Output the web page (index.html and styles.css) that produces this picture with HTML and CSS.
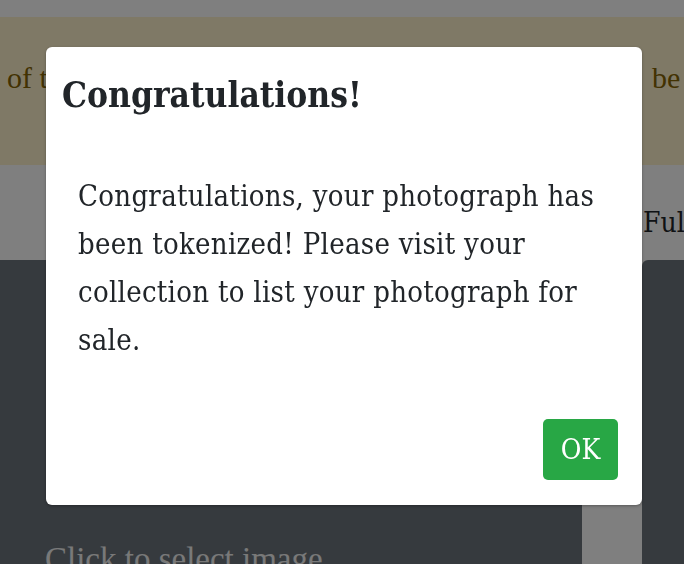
FILE: index.html
```html
<!DOCTYPE html>
<html lang="en">
<head>
    <meta charset="UTF-8">
    <meta name="viewport" content="width=device-width, initial-scale=1.0">
    <title>Mint photograph</title>
    <link rel="stylesheet" href="styles.css">
</head>
<body>
    <div class="page">
        <div class="topbar"></div>

        <div class="alert">
            <span class="alert-left">of the network fee will</span>
            <span class="alert-right">be charged.</span>
        </div>

        <div class="main">
            <div class="col">
                <div class="col-label"></div>
                <div class="panel">
                    <div class="panel-hint">Click to select image</div>
                </div>
            </div>
            <div class="col">
                <div class="col-label">Full size</div>
                <div class="panel panel-right"></div>
            </div>
        </div>
    </div>

    <!-- modal -->
    <div class="backdrop"></div>
    <div class="modal">
        <div class="modal-header">
            <h2 class="modal-title">Congratulations!</h2>
        </div>
        <div class="modal-body">
            Congratulations, your photograph has been tokenized! Please visit your collection to list your photograph for sale.
        </div>
        <div class="modal-footer">
            <button class="btn-ok">OK</button>
        </div>
    </div>
</body>
</html>
```

FILE: styles.css
```css
body {
    margin: 0;
    width: 684px;
    height: 564px;
    overflow: hidden;
    background: white;
    font-family: 'DejaVu Serif Condensed', 'DejaVu Serif', serif;
    font-stretch: condensed;
    color: #212529;
}

.page {
    width: 684px;
}

.topbar {
    height: 17px;
    background: white;
}

.alert {
    height: 148px;
    background: #fff3cd;
    color: #856404;
    font-family: 'Liberation Serif', serif;
    font-stretch: normal;
    font-size: 30px;
    display: grid;
    grid-template-columns: 645px 200px;
    padding: 44px 0 0 7px;
    box-sizing: border-box;
    white-space: nowrap;
    overflow: hidden;
}

.main {
    display: grid;
    grid-template-columns: 582px 60px 42px;
}

.main .col:last-child {
    grid-column: 3;
    overflow: hidden;
}

.col-label {
    height: 95px;
    box-sizing: border-box;
    padding-top: 41px;
    padding-left: 1px;
    font-size: 28px;
    color: #212529;
    white-space: nowrap;
}

.panel {
    height: 304px;
    background: #6c757d;
    padding: 281px 0 0 45px;
    box-sizing: border-box;
    overflow: hidden;
}

.panel-right {
    border-radius: 6px 0 0 0;
}

.panel-hint {
    font-family: 'Liberation Serif', serif;
    font-stretch: normal;
    font-size: 33px;
    color: #f2f2f2;
    white-space: nowrap;
}

.backdrop {
    position: fixed;
    inset: 0;
    background: rgba(0,0,0,0.5);
}

.modal {
    position: absolute;
    left: 46px;
    top: 47px;
    width: 596px;
    height: 458px;
    background: white;
    border-radius: 6px;
    box-shadow: 0 1px 3px rgba(0,0,0,0.3);
    display: flex;
    flex-direction: column;
}

.modal-header {
    padding: 27px 16px 0 16px;
}

.modal-title {
    margin: 0;
    font-size: 35px;
    font-weight: bold;
    line-height: 42px;
    color: #212529;
}

.modal-body {
    padding: 56px 32px 0 32px;
    font-size: 29px;
    letter-spacing: 0.3px;
    line-height: 48px;
    color: #212529;
}

.modal-footer {
    margin-top: auto;
    display: flex;
    justify-content: flex-end;
    padding: 0 24px 25px 0;
}

.btn-ok {
    width: 75px;
    height: 61px;
    background: #28a745;
    color: white;
    border: none;
    border-radius: 5px;
    font-family: inherit;
    font-stretch: condensed;
    font-size: 28px;
    padding: 0;
    cursor: pointer;
}
```
